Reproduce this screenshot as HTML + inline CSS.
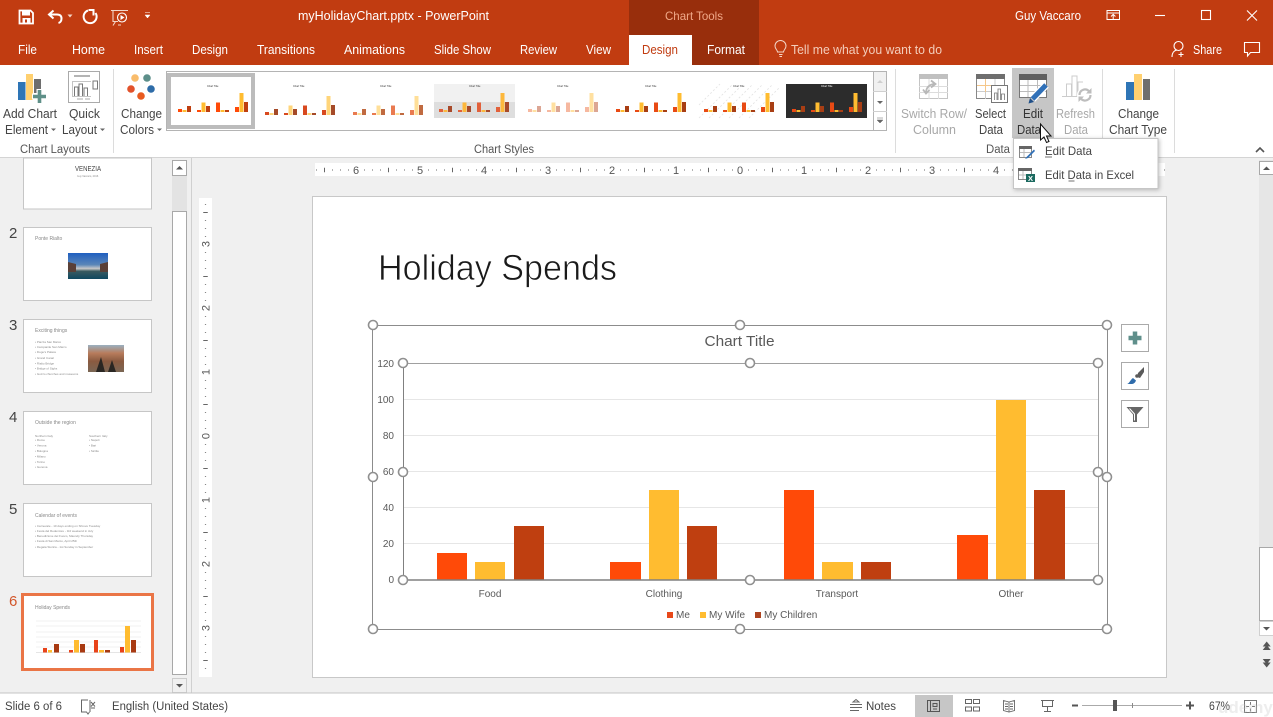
<!DOCTYPE html>
<html><head><meta charset="utf-8"><title>myHolidayChart.pptx - PowerPoint</title>
<style>
html,body{margin:0;padding:0;background:#f0f0f0;width:1273px;height:717px;overflow:hidden}
svg{display:block;font-family:"Liberation Sans",sans-serif}
.w{fill:#fff;font-size:12.5px}
.r{fill:#444;font-size:12.5px}
.d{fill:#a8a8a8;font-size:12.5px}
.g{fill:#555;font-size:11.5px}
.a{fill:#595959;font-size:10px}
.t{fill:#8a8a8a;font-size:3px}
.n{fill:#555;font-size:11px}
.h{fill:#fff;stroke:#909090;stroke-width:1.6}
.me{fill:var(--a,#ff4a08)}.wf{fill:var(--b,#ffbc30)}.ch{fill:var(--c,#bf3f10)}
</style></head><body>
<svg width="1273" height="717" viewBox="0 0 1273 717" xmlns="http://www.w3.org/2000/svg">
<defs>
<g id="bars">
<rect class="me" x="0" y="-3" width="4" height="3"/><rect class="wf" x="4.500" y="-2" width="4" height="2"/><rect class="ch" x="9" y="-6" width="4" height="6"/>
<rect class="me" x="19" y="-2" width="4" height="2"/><rect class="wf" x="23.500" y="-9.500" width="4" height="9.500"/><rect class="ch" x="28" y="-6" width="4" height="6"/>
<rect class="me" x="38" y="-9.500" width="4" height="9.500"/><rect class="wf" x="42.500" y="-2" width="4" height="2"/><rect class="ch" x="47" y="-2" width="4" height="2"/>
<rect class="me" x="57" y="-5" width="4" height="5"/><rect class="wf" x="61.500" y="-19" width="4" height="19"/><rect class="ch" x="66" y="-10" width="4" height="10"/>
</g>
<linearGradient id="rl" x1="0" y1="0" x2="0" y2="1"><stop offset="0" stop-color="#1f5fc0"/><stop offset=".45" stop-color="#5a86b8"/><stop offset=".6" stop-color="#c8c8c8"/><stop offset=".7" stop-color="#3a5a60"/><stop offset="1" stop-color="#0f4860"/></linearGradient>
<linearGradient id="vn" x1="0" y1="0" x2="0" y2="1"><stop offset="0" stop-color="#9ab0c0"/><stop offset=".3" stop-color="#b87c5c"/><stop offset=".6" stop-color="#8a5a40"/><stop offset="1" stop-color="#7a6654"/></linearGradient>
</defs>

<!-- title bar -->
<rect width="1273" height="65" fill="#c13c11"/>
<rect x="629" width="130" height="65" fill="#982e0c"/>
<rect x="629" y="35" width="63" height="30" fill="#fff"/>
<!-- QAT -->
<path d="M19.500 10.500h11l2.500 2.500v10.500h-13.500z" fill="none" stroke="#fff" stroke-width="1.800"/><rect x="22" y="10.500" width="8" height="5" fill="#fff"/><rect x="22.500" y="18" width="8" height="5.500" fill="#fff"/><rect x="25" y="19.500" width="2" height="3" fill="#c13c11"/>
<path d="M53.500 10.500l-4.500 4 4.500 4M49 14.500h8c3.500 0 4.500 2 4.500 4s-1 4-3 4.500" fill="none" stroke="#fff" stroke-width="2"/>
<path d="M67.500 14.500h5l-2.500 3z" fill="#f3d6c8"/>
<path d="M88 10.500a6.500 6.500 0 1 0 7.500 2.500M88.500 10h5v5.500" fill="none" stroke="#fff" stroke-width="2"/>
<path d="M111 10.500h17M113 10.500v11h5M118 25h3M115.500 21.500l-2.500 4" fill="none" stroke="#f3d6c8" stroke-width="1.100"/><circle cx="122" cy="17.500" r="4.500" fill="none" stroke="#fff" stroke-width="1.100"/><path d="M120.500 15v5l4-2.500z" fill="#fff"/>
<path d="M145 12.500h5M145 15h5l-2.500 3z" fill="#fff" stroke="#fff" stroke-width=".5"/>
<text x="298" y="20" class="w" textLength="191" lengthAdjust="spacingAndGlyphs">myHolidayChart.pptx  -  PowerPoint</text>
<text x="665" y="20" class="w" style="fill:#f0a888;font-size:12px" textLength="58" lengthAdjust="spacingAndGlyphs">Chart Tools</text>
<text x="1015" y="20" class="w" textLength="66" lengthAdjust="spacingAndGlyphs">Guy Vaccaro</text>
<path d="M1107 10.500h12.500v9h-12.500zM1107 13h12.500M1113.200 19v-4.500M1111 16.500l2.200-2.200 2.200 2.200" fill="none" stroke="#fff" stroke-width="1"/>
<path d="M1155 15.500h10" stroke="#fff" stroke-width="1.100"/>
<rect x="1201.500" y="10.500" width="9" height="9" fill="none" stroke="#fff" stroke-width="1.100"/>
<path d="M1247 10.500l10 10M1257 10.500l-10 10" stroke="#fff" stroke-width="1.100"/>
<!-- tabs -->
<text x="18" y="54" class="w" textLength="19" lengthAdjust="spacingAndGlyphs">File</text>
<text x="72" y="54" class="w" textLength="33" lengthAdjust="spacingAndGlyphs">Home</text>
<text x="134" y="54" class="w" textLength="29" lengthAdjust="spacingAndGlyphs">Insert</text>
<text x="192" y="54" class="w" textLength="36" lengthAdjust="spacingAndGlyphs">Design</text>
<text x="257" y="54" class="w" textLength="58" lengthAdjust="spacingAndGlyphs">Transitions</text>
<text x="344" y="54" class="w" textLength="61" lengthAdjust="spacingAndGlyphs">Animations</text>
<text x="434" y="54" class="w" textLength="57" lengthAdjust="spacingAndGlyphs">Slide Show</text>
<text x="520" y="54" class="w" textLength="37" lengthAdjust="spacingAndGlyphs">Review</text>
<text x="586" y="54" class="w" textLength="25" lengthAdjust="spacingAndGlyphs">View</text>
<text x="642" y="54" style="fill:#c13c11;font-size:12.500px" textLength="36" lengthAdjust="spacingAndGlyphs">Design</text>
<text x="707" y="54" class="w" textLength="38" lengthAdjust="spacingAndGlyphs">Format</text>
<path d="M779 54.500h3.500M779.500 56.500h2.500M777.500 52c0-2-2.500-3-2.500-6a5.500 5.500 0 0 1 11 0c0 3-2.500 4-2.500 6z" fill="none" stroke="#f3d6c8" stroke-width="1"/>
<text x="791" y="54" class="w" style="fill:#f3cdbb" textLength="151" lengthAdjust="spacingAndGlyphs">Tell me what you want to do</text>
<circle cx="1178.500" cy="46" r="4.500" fill="none" stroke="#fff" stroke-width="1.100"/><path d="M1172 57c0-4 2-6.500 5-7M1181 52v5M1178.500 54.500h5" fill="none" stroke="#fff" stroke-width="1.100"/>
<text x="1193" y="54" class="w" style="font-size:13px" textLength="29" lengthAdjust="spacingAndGlyphs">Share</text>
<path d="M1244.500 42.500h15v10h-9l-3 3.500v-3.500h-3z" fill="none" stroke="#fff" stroke-width="1.100"/>

<!-- ribbon -->
<rect y="65" width="1273" height="92" fill="#fff"/>
<rect y="157" width="1273" height="1" fill="#d4d4d4"/>
<g stroke="#dcdcdc"><path d="M113.500 69v84M895.500 69v84M1102.500 69v84M1174.500 69v84"/></g>
<!-- add chart icon -->
<rect x="18" y="82" width="7.500" height="18" fill="#2e75b6"/><rect x="26" y="74" width="7" height="26" fill="#ffd070"/><rect x="34" y="79" width="7" height="14" fill="#6e6e6e"/>
<path d="M39.500 89v15M32 96.500h15" stroke="#fff" stroke-width="6"/>
<path d="M39.500 90v13M33 96.500h13" stroke="#5f9088" stroke-width="3.600"/>
<text x="3" y="118" class="r" textLength="54" lengthAdjust="spacingAndGlyphs">Add Chart</text>
<text x="5" y="134" class="r" textLength="43" lengthAdjust="spacingAndGlyphs">Element</text><path d="M51 128.500h5l-2.500 2.500z" fill="#666"/>
<!-- quick layout -->
<rect x="68.500" y="71.500" width="31" height="31" fill="#fff" stroke="#aaa"/>
<rect x="74" y="75" width="16" height="2" fill="#b4b4b4"/><path d="M73 81.500h18M73 96.500h18M72.500 81v16" fill="none" stroke="#c4c4c4"/><path d="M74.500 96v-9h3.500v9M79 96v-12h3.500v12M84 96v-8h3.500v8" fill="#fff" stroke="#777"/><rect x="93" y="81" width="4.500" height="8" fill="#fff" stroke="#777"/><rect x="77" y="98.500" width="6" height="1" fill="#aaa"/><rect x="85" y="98.500" width="5" height="1" fill="#aaa"/>
<text x="69" y="118" class="r" textLength="31" lengthAdjust="spacingAndGlyphs">Quick</text>
<text x="62" y="134" class="r" textLength="35" lengthAdjust="spacingAndGlyphs">Layout</text><path d="M100 128.500h5l-2.500 2.500z" fill="#666"/>
<text x="20" y="153" class="g" textLength="70" lengthAdjust="spacingAndGlyphs">Chart Layouts</text>
<!-- change colours -->
<circle cx="135" cy="78" r="3.800" fill="#f9bc6b"/><circle cx="147" cy="78" r="3.800" fill="#5d8f8a"/><circle cx="131" cy="89" r="3.800" fill="#e2522b"/><circle cx="151" cy="89" r="3.800" fill="#2e6ca8"/><circle cx="141" cy="96" r="3.800" fill="#e85b20"/>
<text x="121" y="118" class="r" textLength="41" lengthAdjust="spacingAndGlyphs">Change</text>
<text x="120" y="134" class="r" textLength="34" lengthAdjust="spacingAndGlyphs">Colors</text><path d="M157 128.500h5l-2.500 2.500z" fill="#666"/>
<!-- gallery -->
<rect x="166.500" y="71.500" width="720" height="59" fill="#fff" stroke="#b4b4b4"/>
<rect x="169" y="75" width="84" height="52" fill="#fff" stroke="#bcbcbc" stroke-width="4"/>
<rect x="434" y="84" width="81" height="34" fill="#dedede"/><rect x="434" y="84" width="81" height="18" fill="#f1f1f1"/>
<rect x="786" y="84" width="81" height="34" fill="#2c2c2c"/>
<g fill="none" stroke="#e2e2e2" stroke-width=".8" stroke-dasharray="2 2"><path d="M699 118l34-34M709 118l34-34M719 118l34-34M729 118l34-34M739 118l34-34M749 118l30-30M699 105l21-21"/></g>
<g fill="#333" font-size="2.500">
<text x="207" y="87">Chart Title</text><text x="293" y="87">Chart Title</text><text x="380" y="87">Chart Title</text><text x="469" y="87">Chart Title</text><text x="557" y="87">Chart Title</text><text x="645" y="87">Chart Title</text><text x="733" y="87">Chart Title</text><text x="821" y="87" fill="#fff">Chart Title</text>
</g>
<use href="#bars" x="178" y="112"/>
<use href="#bars" x="265" y="115" style="--a:#d8491f;--b:#ffd57a;--c:#a54a28"/>
<use href="#bars" x="353" y="115" style="--a:#e97a50;--b:#ffdf98;--c:#c06a40"/>
<use href="#bars" x="439" y="112" style="--a:#e2603a;--b:#fdb83c;--c:#a84a2a"/>
<use href="#bars" x="528" y="112" style="--a:#f6b8a0;--b:#ffe0a0;--c:#dca694"/>
<use href="#bars" x="616" y="112" style="--a:#e84a14;--b:#ffbc30;--c:#a83e14"/>
<use href="#bars" x="704" y="112" style="--a:#e84a14;--b:#ffbc30;--c:#a83e14"/>
<use href="#bars" x="792" y="112" style="--a:#e84a14;--b:#ffbc30;--c:#a83e14"/>
<rect x="873.500" y="71.500" width="13" height="59" fill="#fff" stroke="#b4b4b4"/><path d="M873 91.500h14M873 111.500h14" stroke="#d0d0d0"/>
<rect x="874" y="72" width="12" height="19" fill="#f1f1f1"/>
<path d="M877 83l3-3 3 3z" fill="#cfcfcf"/><path d="M877 101h6l-3 3z" fill="#666"/><path d="M877 118h6M877 120h6l-3 3z" fill="#666" stroke="#666" stroke-width=".5"/>
<text x="474" y="153" class="g" textLength="60" lengthAdjust="spacingAndGlyphs">Chart Styles</text>
<!-- switch row -->
<rect x="919.500" y="74.500" width="28" height="24" fill="#fff" stroke="#c4c4c4"/><rect x="919" y="74" width="29" height="5" fill="#c0c0c0"/><path d="M919 86.500h29M919 92.500h29M929 79v20M938.500 79v20" stroke="#dcdcdc"/><path d="M926 93c0-5 3-9 9-9M931 80.500l4.500 3.500-4.500 3.500M923 89.500l3 4 3.500-3.500" fill="none" stroke="#b8b8b8" stroke-width="1.800"/>
<text x="901" y="118" class="d" textLength="66" lengthAdjust="spacingAndGlyphs">Switch Row/</text>
<text x="913" y="134" class="d" textLength="43" lengthAdjust="spacingAndGlyphs">Column</text>
<!-- select data -->
<rect x="976.500" y="74.500" width="28" height="24" fill="#fff" stroke="#888"/><rect x="976" y="74" width="29" height="5" fill="#6e6e6e"/><path d="M977 85.500h27M977 91.500h27M985.500 79v20M995 79v20" stroke="#ccc"/><path d="M977 85.500h19M985.500 79v13" stroke="#f5c78a"/>
<rect x="991.500" y="85.500" width="16" height="17" fill="#fff" stroke="#777"/><path d="M994.500 100v-7h2.500v7M998 100v-11h2.500v11M1001.500 100v-6h3v6" fill="#fff" stroke="#777" stroke-width=".8"/>
<text x="975" y="118" class="r" textLength="31" lengthAdjust="spacingAndGlyphs">Select</text>
<text x="979" y="134" class="r" textLength="24" lengthAdjust="spacingAndGlyphs">Data</text>
<!-- edit data -->
<rect x="1012" y="68" width="42" height="70" fill="#c6c6c6"/>
<rect x="1019.500" y="74.500" width="27" height="23" fill="#fff" stroke="#777"/><rect x="1019" y="74" width="28" height="6" fill="#606060"/><path d="M1020 85.500h26M1020 91.500h26M1028 80v17M1037.500 80v17" stroke="#bbb"/>
<path d="M1046 85l-13.500 14" stroke="#fff" stroke-width="7.500"/>
<path d="M1046 85l-13.500 14" stroke="#2f70b8" stroke-width="5"/><path d="M1028.500 103.500l1.500-5.500 4 4z" fill="#1f4f88"/>
<text x="1023" y="118" class="r" style="fill:#333" textLength="20" lengthAdjust="spacingAndGlyphs">Edit</text>
<text x="1017" y="134" class="r" style="fill:#333" textLength="24" lengthAdjust="spacingAndGlyphs">Data</text>
<!-- refresh -->
<path d="M1062 96.500h20" stroke="#ccc"/><path d="M1066.500 96v-12h5v12M1072 96v-20h5v20M1078 96v-14h5" fill="#fff" stroke="#ccc"/>
<circle cx="1085" cy="95" r="8" fill="#fff"/>
<path d="M1079.500 95a5.500 5.500 0 0 1 9.500-3.800M1090.500 95a5.500 5.500 0 0 1-9.500 3.800" fill="none" stroke="#bdbdbd" stroke-width="2.200"/>
<path d="M1091.500 88v5.500h-5.500zM1078.500 102v-5.500h5.500z" fill="#bdbdbd"/>
<text x="1056" y="118" class="d" textLength="39" lengthAdjust="spacingAndGlyphs">Refresh</text>
<text x="1064" y="134" class="d" textLength="24" lengthAdjust="spacingAndGlyphs">Data</text>
<!-- change chart type -->
<rect x="1126" y="82" width="8" height="18" fill="#2e75b6"/><rect x="1134" y="74" width="8" height="26" fill="#ffd070"/><rect x="1143" y="79" width="7" height="21" fill="#6e6e6e"/>
<text x="1118" y="118" class="r" textLength="41" lengthAdjust="spacingAndGlyphs">Change</text>
<text x="1109" y="134" class="r" textLength="58" lengthAdjust="spacingAndGlyphs">Chart Type</text>
<text x="986" y="153" class="g" textLength="24" lengthAdjust="spacingAndGlyphs">Data</text>
<path d="M1256 152l4-4 4 4" fill="none" stroke="#555" stroke-width="1.600"/>

<!-- thumbnails panel -->
<rect x="172" y="175" width="15" height="36" fill="#e3e3e3"/>
<rect x="172.500" y="160.500" width="14" height="15" fill="#fff" stroke="#a8a8a8"/><path d="M176 169.500l3.500-3.500 3.500 3.500z" fill="#555"/>
<rect x="172.500" y="211.500" width="14" height="463" fill="#fff" stroke="#a8a8a8"/>
<rect x="172.500" y="678.500" width="14" height="14" fill="#f0f0f0" stroke="#c4c4c4" stroke-width=".8"/><path d="M176 684h7l-3.500 3.500z" fill="#555"/>
<path d="M191.500 158v535" stroke="#d0d0d0"/>

<g fill="#fff" stroke="#c6c6c6">
<rect x="23.500" y="158" width="128" height="51"/>
<rect x="23.500" y="227.500" width="128" height="73"/>
<rect x="23.500" y="319.500" width="128" height="73"/>
<rect x="23.500" y="411.500" width="128" height="73"/>
<rect x="23.500" y="503.500" width="128" height="73"/>
</g>
<rect x="22.500" y="594.500" width="130" height="75" fill="#fff" stroke="#ea7546" stroke-width="3"/>
<g font-size="15" fill="#444"><text x="9" y="238">2</text><text x="9" y="330">3</text><text x="9" y="422">4</text><text x="9" y="514">5</text><text x="9" y="606" fill="#d2562a">6</text></g>
<text x="75" y="171" font-size="7" fill="#444" textLength="26" lengthAdjust="spacingAndGlyphs">VENEZIA</text>
<text x="77" y="177" class="t" style="font-size:2.500px">Guy Vaccaro, 2016</text>
<text x="35" y="240" font-size="5" fill="#888">Ponte Rialto</text>
<rect x="68" y="253" width="40" height="26" fill="url(#rl)"/>
<path d="M68 262l8 2v8h-8zM108 262l-8 2v8h8z" fill="#5a4038"/>
<text x="35" y="332" font-size="5" fill="#888">Exciting things</text>
<g class="t"><text x="35" y="343">• Piazza San Marco</text><text x="35" y="348">• Campanile San Marco</text><text x="35" y="353">• Doge's Palace</text><text x="35" y="359">• Grand Canal</text><text x="35" y="364.500">• Rialto Bridge</text><text x="35" y="369.500">• Bridge of Sighs</text><text x="35" y="375">• Gozzo churches and museums</text></g>
<rect x="88" y="345" width="36" height="27" fill="url(#vn)"/><path d="M96 372l5-15 4 15zM108 372l4-12 4 12z" fill="#2a2622"/>
<text x="35" y="424" font-size="5" fill="#888">Outside the region</text>
<g class="t"><text x="35" y="437">Northern Italy</text><text x="35" y="441">• Rome</text><text x="35" y="446.500">• Verona</text><text x="35" y="452">• Bologna</text><text x="35" y="457.500">• Milano</text><text x="35" y="463">• Torino</text><text x="35" y="468">• Genova</text><text x="89" y="437">Southern Italy</text><text x="89" y="441">• Napoli</text><text x="89" y="446.500">• Bari</text><text x="89" y="452">• Sicilia</text></g>
<text x="35" y="517" font-size="5" fill="#888">Calendar of events</text>
<g class="t"><text x="35" y="527">• Carnevale - 10 days ending on Shrove Tuesday</text><text x="35" y="532">• Festa del Redentore - 3rd weekend in July</text><text x="35" y="537">• Benedizione del Fuoco, Maundy Thursday</text><text x="35" y="542">• Festa di San Marco, April 25th</text><text x="35" y="548">• Regata Storica - 1st Sunday in September</text></g>
<text x="35" y="609" font-size="5" fill="#888">Holiday Spends</text>
<g stroke="#ececec" stroke-width=".7"><path d="M36 621h105M36 626h105M36 632h105M36 637h105M36 642h105M36 647h105"/></g>
<path d="M36 652.500h105" stroke="#ccc" stroke-width=".6"/>
<g>
<rect x="43" y="648" width="4" height="4.500" fill="#e8431a"/><rect x="48" y="650" width="4" height="2.500" fill="#ffbc30"/><rect x="54" y="644" width="5" height="8.500" fill="#a83a12"/>
<rect x="69" y="650" width="4" height="2.500" fill="#e8431a"/><rect x="74" y="640" width="5" height="12.500" fill="#ffbc30"/><rect x="80" y="644" width="5" height="8.500" fill="#a83a12"/>
<rect x="94" y="640" width="4" height="12.500" fill="#e8431a"/><rect x="99" y="650" width="5" height="2.500" fill="#ffbc30"/><rect x="105" y="650" width="5" height="2.500" fill="#a83a12"/>
<rect x="120" y="647" width="4" height="5.500" fill="#e8431a"/><rect x="125" y="626" width="5" height="26.500" fill="#ffbc30"/><rect x="131" y="640" width="5" height="12.500" fill="#a83a12"/>
</g>

<!-- rulers -->
<rect x="315" y="163" width="850" height="13" fill="#fff"/>
<path d="M316 170h849" stroke="#888" stroke-width="1.200" stroke-dasharray="1 7"/>
<path d="M324 170h841" stroke="#666" stroke-width="4.500" stroke-dasharray="1 63"/>
<g fill="#fff"><rect x="351" y="164" width="10" height="11"/><rect x="415" y="164" width="10" height="11"/><rect x="479" y="164" width="10" height="11"/><rect x="543" y="164" width="10" height="11"/><rect x="607" y="164" width="10" height="11"/><rect x="671" y="164" width="10" height="11"/><rect x="735" y="164" width="10" height="11"/><rect x="799" y="164" width="10" height="11"/><rect x="863" y="164" width="10" height="11"/><rect x="927" y="164" width="10" height="11"/><rect x="991" y="164" width="10" height="11"/></g>
<g class="n" text-anchor="middle"><text x="356" y="174">6</text><text x="420" y="174">5</text><text x="484" y="174">4</text><text x="548" y="174">3</text><text x="612" y="174">2</text><text x="676" y="174">1</text><text x="740" y="174">0</text><text x="804" y="174">1</text><text x="868" y="174">2</text><text x="932" y="174">3</text><text x="996" y="174">4</text></g>
<rect x="199" y="198" width="13" height="479" fill="#fff"/>
<path d="M205.500 204v472" stroke="#888" stroke-width="1.200" stroke-dasharray="1 7"/>
<path d="M205.500 212v464" stroke="#666" stroke-width="4.500" stroke-dasharray="1 63"/>
<g fill="#fff"><rect x="200" y="239" width="11" height="10"/><rect x="200" y="303" width="11" height="10"/><rect x="200" y="367" width="11" height="10"/><rect x="200" y="431" width="11" height="10"/><rect x="200" y="495" width="11" height="10"/><rect x="200" y="559" width="11" height="10"/><rect x="200" y="623" width="11" height="10"/></g>
<g class="n" text-anchor="middle">
<text transform="translate(209.500 244) rotate(-90)">3</text><text transform="translate(209.500 308) rotate(-90)">2</text><text transform="translate(209.500 372) rotate(-90)">1</text><text transform="translate(209.500 436) rotate(-90)">0</text><text transform="translate(209.500 500) rotate(-90)">1</text><text transform="translate(209.500 564) rotate(-90)">2</text><text transform="translate(209.500 628) rotate(-90)">3</text>
</g>

<!-- slide -->
<rect x="312.500" y="196.500" width="854" height="481" fill="#fff" stroke="#c8c8c8"/>
<text x="378" y="280" font-size="36" fill="#1a1a1a" stroke="#fff" stroke-width=".7" textLength="239" lengthAdjust="spacingAndGlyphs">Holiday Spends</text>

<!-- chart -->
<g stroke="#e6e6e6"><path d="M403 399.500h695M403 435.500h695M403 471.500h695M403 507.500h695M403 543.500h695"/></g>
<rect x="437" y="553" width="30" height="27" fill="#ff4a08"/><rect x="475" y="562" width="30" height="18" fill="#ffbc30"/><rect x="514" y="526" width="30" height="54" fill="#bf3f10"/>
<rect x="610" y="562" width="31" height="18" fill="#ff4a08"/><rect x="649" y="490" width="30" height="90" fill="#ffbc30"/><rect x="687" y="526" width="30" height="54" fill="#bf3f10"/>
<rect x="784" y="490" width="30" height="90" fill="#ff4a08"/><rect x="822" y="562" width="31" height="18" fill="#ffbc30"/><rect x="861" y="562" width="30" height="18" fill="#bf3f10"/>
<rect x="957" y="535" width="31" height="45" fill="#ff4a08"/><rect x="996" y="400" width="30" height="180" fill="#ffbc30"/><rect x="1034" y="490" width="31" height="90" fill="#bf3f10"/>
<rect x="372.500" y="325.500" width="735" height="304" fill="none" stroke="#8c8c8c"/>
<rect x="403.500" y="363.500" width="695" height="216.500" fill="none" stroke="#a0a0a0"/>
<path d="M403 580h695" stroke="#808080" stroke-width="1.400"/><path d="M403.500 363v217" stroke="#808080"/>
<text x="704.500" y="346" font-size="15" fill="#595959" textLength="70" lengthAdjust="spacingAndGlyphs">Chart Title</text>
<g class="a" text-anchor="end"><text x="394" y="367">120</text><text x="394" y="403">100</text><text x="394" y="439">80</text><text x="394" y="475">60</text><text x="394" y="511">40</text><text x="394" y="547">20</text><text x="394" y="583">0</text></g>
<g class="a" text-anchor="middle"><text x="490" y="597">Food</text><text x="664" y="597">Clothing</text><text x="837" y="597">Transport</text><text x="1011" y="597">Other</text></g>
<rect x="667" y="612" width="6" height="6" fill="#e8481a"/><text x="676" y="618" class="a">Me</text>
<rect x="700" y="612" width="6" height="6" fill="#ffbc30"/><text x="709" y="618" class="a">My Wife</text>
<rect x="755" y="612" width="6" height="6" fill="#ad4420"/><text x="764" y="618" class="a">My Children</text>
<g class="h">
<circle cx="373" cy="325" r="4.500"/><circle cx="740" cy="325" r="4.500"/><circle cx="1107" cy="325" r="4.500"/><circle cx="373" cy="477" r="4.500"/><circle cx="1107" cy="477" r="4.500"/><circle cx="373" cy="629" r="4.500"/><circle cx="740" cy="629" r="4.500"/><circle cx="1107" cy="629" r="4.500"/>
<circle cx="403" cy="363" r="4.500"/><circle cx="750" cy="363" r="4.500"/><circle cx="1098" cy="363" r="4.500"/><circle cx="403" cy="472" r="4.500"/><circle cx="1098" cy="472" r="4.500"/><circle cx="403" cy="580" r="4.500"/><circle cx="750" cy="580" r="4.500"/><circle cx="1098" cy="580" r="4.500"/>
</g>
<!-- chart side buttons -->
<g fill="#fff" stroke="#aaa"><rect x="1121.500" y="324.500" width="27" height="27"/><rect x="1121.500" y="362.500" width="27" height="27"/><rect x="1121.500" y="400.500" width="27" height="27"/></g>
<path d="M1135 331.500v13M1128.500 338h13" stroke="#5f8f8b" stroke-width="4.500"/>
<path d="M1144 367l-6 6-1 4 3 1 4-6z" fill="#5a5a5a"/><circle cx="1137" cy="376" r="1.800" fill="#5a5a5a"/>
<path d="M1127 384c2.500-.5 3-4 6-6l3 2.500c-.5 1.500-2 3.500-4 3.500z" fill="#2f6cab"/>
<path d="M1126.500 407h17l-6.500 7.500v7.500h-4v-7.500z" fill="#666"/><path d="M1129.500 408.500l5 5.500v6.500" fill="none" stroke="#fff" stroke-width="1"/>

<!-- right scrollbar -->
<rect x="1259" y="160" width="14" height="388" fill="#e6e6e6"/>
<rect x="1259.500" y="161.500" width="14" height="13" fill="#fff" stroke="#a8a8a8"/><path d="M1263 170l3.500-3.500 3.500 3.500z" fill="#555"/>
<rect x="1259.500" y="547.500" width="14" height="73" fill="#fff" stroke="#a8a8a8"/>
<rect x="1259.500" y="621.500" width="14" height="14" fill="#fff" stroke="#d0d0d0"/><path d="M1263 627h7l-3.500 3.500z" fill="#555"/>
<path d="M1262.700 646.500l4-5 4 5zM1262.700 650l4-5 4 5zM1262.700 659l4 5 4-5zM1262.700 662.500l4 5 4-5z" fill="#555"/>

<!-- dropdown -->
<rect x="1013.500" y="138.500" width="144.500" height="50" fill="#fff" stroke="#c6c6c6" style="filter:drop-shadow(1px 1px 2px rgba(0,0,0,.25))"/>
<rect x="1019.500" y="146.500" width="12" height="11" fill="#fff" stroke="#888"/><rect x="1019" y="146" width="13" height="3" fill="#666"/><path d="M1020 152.500h11M1024 149v8" stroke="#bbb"/><path d="M1034 149.500l-7 7-2 2.500 3-1 7-7z" fill="#2f70b8"/>
<rect x="1018.500" y="168.500" width="13" height="11" fill="#fff" stroke="#888"/><rect x="1018" y="168" width="14" height="3" fill="#666"/><path d="M1019 175h12M1023 171v8" stroke="#bbb"/><rect x="1026" y="174" width="9" height="8" fill="#1c6a60"/><text x="1028" y="181" font-size="7.500" font-weight="bold" fill="#fff">X</text>
<text x="1045" y="155" class="r" style="font-size:12px" textLength="47" lengthAdjust="spacingAndGlyphs">Edit Data</text>
<text x="1045" y="179" class="r" style="font-size:12px" textLength="89" lengthAdjust="spacingAndGlyphs">Edit Data in Excel</text>
<path d="M1045 157h7M1068.500 181h6" stroke="#444" stroke-width=".7"/>
<!-- cursor -->
<path d="M1040.500 124v16l3.500-3 2.500 5.500 2.500-1-2.500-5.500h4.500z" fill="#fff" stroke="#111" stroke-width="1"/>

<!-- status bar -->
<rect y="693" width="1273" height="24" fill="#fff"/>
<rect y="692.500" width="1273" height="1" fill="#c4c4c4"/>
<text x="5" y="710" class="r" style="font-size:11.500px" textLength="57" lengthAdjust="spacingAndGlyphs">Slide 6 of 6</text>
<path d="M88 700h-6.500v12h5l1.500 2 1.500-2M90 712v-12" fill="none" stroke="#666"/><path d="M91 702l4 4.500M95 702l-4 4.500M91 708h4" stroke="#666" fill="none"/>
<text x="112" y="710" class="r" style="font-size:11.500px" textLength="116" lengthAdjust="spacingAndGlyphs">English (United States)</text>
<path d="M853 702l3-2.500 3 2.500zM850 704.500h12M850 707.500h12M850 710.500h9" stroke="#666" fill="none"/>
<text x="866" y="710" class="r" style="font-size:11.500px" textLength="30" lengthAdjust="spacingAndGlyphs">Notes</text>
<rect x="915" y="695" width="38" height="22" fill="#c6c6c6"/>
<path d="M927.500 700.500h12v11h-12zM930.500 700.500v11M933 703.500h4v3h-4zM933 709h4" fill="none" stroke="#555"/>
<g fill="none" stroke="#666"><rect x="965.500" y="699.500" width="6" height="4"/><rect x="973.500" y="699.500" width="6" height="4"/><rect x="965.500" y="707" width="6" height="4"/><rect x="973.500" y="707" width="6" height="4"/></g>
<path d="M1003.500 700.500l5.500 1.500 5.500-1.500v10l-5.500 1.500-5.500-1.500zM1009 702v10M1005 704h3M1005 706.500h3M1005 709h3M1010 704h3M1010 706.500h3M1010 709h3" fill="none" stroke="#666" stroke-width=".9"/>
<path d="M1041 700.500h13M1042.500 700.500v6h10v-6M1047.500 706.500v5M1044 711.500h7" fill="none" stroke="#666"/>
<path d="M1072 705.500h6" stroke="#555" stroke-width="2"/>
<path d="M1082 705.500h100" stroke="#aaa"/><path d="M1132.500 703v5" stroke="#888"/>
<rect x="1113" y="700" width="4" height="11" fill="#555"/>
<path d="M1186 705.500h8M1190 701.500v8" stroke="#555" stroke-width="2"/>
<text x="1209" y="710" class="r" style="font-size:11.500px" textLength="21" lengthAdjust="spacingAndGlyphs">67%</text>
<rect x="1244.500" y="700.500" width="12" height="12" fill="none" stroke="#777"/>
<path d="M1250.500 702v3M1250.500 708.500v3M1246 706.500h3M1252 706.500h3" stroke="#777"/>
<text x="1218" y="713" font-size="17" font-weight="bold" fill="#c4c4c4" opacity=".3">udemy</text>
</svg>
</body></html>
